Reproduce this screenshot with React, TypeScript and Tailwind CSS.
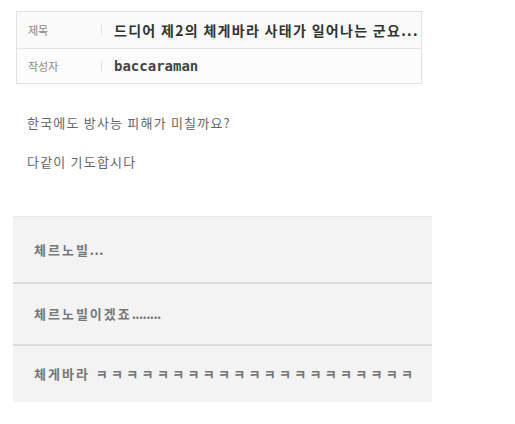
import React from 'react';

const KR = { fontFamily: '"Noto Sans CJK KR", "Noto Sans", sans-serif' };

const COMMENTS = [
  { text: '체르노빌', tail: '...', dots: 'tracking-[0.5px]', laugh: '', h: 'h-[67px]' },
  { text: '체르노빌이겠죠', tail: '........', dots: 'tracking-[-0.6px]', laugh: '', h: 'h-[62px]' },
  { text: '체게바라', tail: '', dots: '', laugh: 'ㅋㅋㅋㅋㅋㅋㅋㅋㅋㅋㅋㅋㅋㅋㅋㅋㅋㅋㅋㅋㅋ', h: 'h-[56px]' },
];

export default function App() {
  return (
    <div className="w-[515px] h-[424px] bg-white overflow-hidden" style={KR}>
      {/* 글 정보 */}
      <div className="ml-[16px] mt-[11px] w-[406px] border border-[#e2e2e2] bg-[#fafafa]">
        <div className="h-[37px] flex items-center border-b border-[#e6e6e6]">
          <span className="w-[84px] shrink-0 pl-[11px] text-[11px] text-[#888]">제목</span>
          <span className="w-px h-[10px] shrink-0 bg-[#e0e0e0]" />
          <span className="pl-[12px] text-[14px] font-bold text-[#333] tracking-[1.3px] whitespace-nowrap">
            드디어 제2의 체게바라 사태가 일어나는 군요...
          </span>
        </div>
        <div className="h-[34px] flex items-center bg-[#fcfcfc]">
          <span className="w-[84px] shrink-0 pl-[11px] text-[11px] text-[#888]">작성자</span>
          <span className="w-px h-[10px] shrink-0 bg-[#e0e0e0]" />
          <span
            className="pl-[12px] text-[14px] font-bold text-[#444]"
            style={{ fontFamily: '"DejaVu Sans Mono", monospace' }}
          >
            baccaraman
          </span>
        </div>
      </div>

      {/* 본문 */}
      <div className="ml-[27px] mt-[29px] text-[13px] text-[#666] leading-[20px] tracking-[1.2px]">
        <p>한국에도 방사능 피해가 미칠까요?</p>
        <p className="mt-[19px]">다같이 기도합시다</p>
      </div>

      {/* 댓글 */}
      <div className="ml-[13px] mt-[44px] w-[419px] bg-[#f3f3f3] border-t border-[#e8e8e8]">
        {COMMENTS.map((c, i) => (
          <div
            key={i}
            className={`${c.h} flex items-center pl-[21px] text-[13px] font-bold text-[#777] whitespace-nowrap ${
              i < COMMENTS.length - 1 ? 'border-b-2 border-[#dcdcdc]' : ''
            }`}
          >
            <span className="tracking-[2px]">{c.text}</span>
            {c.tail && <span className={c.dots}>{c.tail}</span>}
            {c.laugh && <span className="ml-[6px] tracking-[3.3px]">{c.laugh}</span>}
          </div>
        ))}
      </div>
    </div>
  );
}
